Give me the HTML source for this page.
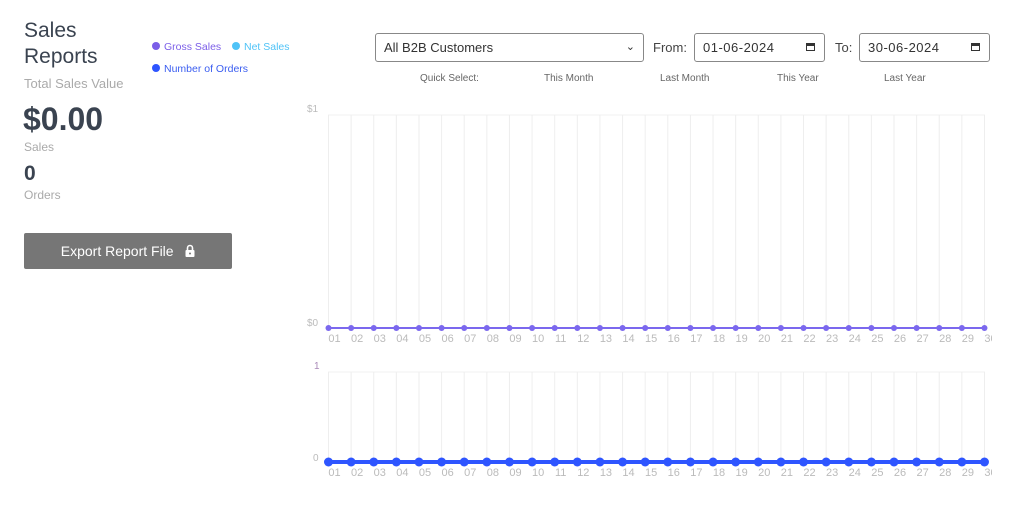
<!DOCTYPE html><html><head><style>
body{margin:0;width:1024px;height:511px;background:#fff;font-family:"Liberation Sans",sans-serif;position:relative;overflow:hidden}
.a{position:absolute;white-space:nowrap}
.box{position:absolute;border:1px solid #888;border-radius:3px;height:29px;box-sizing:border-box;font-size:13px;color:#333;line-height:27px;padding-left:8px}
.dot{display:inline-block;width:8px;height:8px;border-radius:50%;margin-right:4px}
</style></head><body>
<div class="a" style="left:24px;top:18px;font-size:21px;line-height:26px;color:#3a4350">Sales<br>Reports</div>
<div class="a" style="left:24px;top:76px;font-size:13px;color:#aaa">Total Sales Value</div>
<div class="a" style="left:23px;top:101px;font-size:32px;font-weight:bold;color:#3a4350">$0.00</div>
<div class="a" style="left:24px;top:140px;font-size:12px;color:#aaa">Sales</div>
<div class="a" style="left:24px;top:162px;font-size:21px;font-weight:bold;color:#3a4350">0</div>
<div class="a" style="left:24px;top:188px;font-size:12px;color:#aaa">Orders</div>
<div class="a" style="left:24px;top:233px;width:208px;height:36px;background:#767676;border-radius:2px;color:#fff;font-size:14px;line-height:36px;text-align:center">Export Report File &nbsp;&nbsp;<svg width="10" height="13" viewBox="0 0 10 13" style="vertical-align:-1px"><path d="M2.5 6V4a2.5 2.5 0 015 0v2" stroke="#fff" stroke-width="1.6" fill="none"/><rect x="0.5" y="6" width="9" height="7" rx="1" fill="#fff"/><circle cx="5" cy="9.5" r="1" fill="#767676"/></svg></div>
<div class="a" style="left:152px;top:41px;font-size:10.5px;color:#7b5ee8"><span class="dot" style="background:#7b5ee8"></span>Gross Sales</div>
<div class="a" style="left:232px;top:41px;font-size:10.5px;color:#4fc3f7"><span class="dot" style="background:#4fc3f7"></span>Net Sales</div>
<div class="a" style="left:152px;top:63px;font-size:10.5px;color:#3b5ef0"><span class="dot" style="background:#2e55ff"></span>Number of Orders</div>
<div class="box" style="left:375px;top:33px;width:269px">All B2B Customers<span style="position:absolute;right:8px;top:0;font-size:11px">&#8964;</span></div>
<div class="a" style="left:653px;top:40px;font-size:13px;color:#444">From:</div>
<div class="box" style="left:694px;top:33px;width:131px;letter-spacing:0.5px">01-06-2024<span style="position:absolute;right:9px;top:9px;width:9px;height:8px;border:1.5px solid #333;border-top-width:3px;box-sizing:border-box"></span></div>
<div class="a" style="left:835px;top:40px;font-size:13px;color:#444">To:</div>
<div class="box" style="left:859px;top:33px;width:131px;letter-spacing:0.5px">30-06-2024<span style="position:absolute;right:9px;top:9px;width:9px;height:8px;border:1.5px solid #333;border-top-width:3px;box-sizing:border-box"></span></div>
<div class="a" style="left:420px;top:73px;font-size:10px;color:#666">Quick Select:</div>
<div class="a" style="left:544px;top:73px;font-size:10px;color:#666">This Month</div>
<div class="a" style="left:660px;top:73px;font-size:10px;color:#666">Last Month</div>
<div class="a" style="left:777px;top:73px;font-size:10px;color:#666">This Year</div>
<div class="a" style="left:884px;top:73px;font-size:10px;color:#666">Last Year</div>
<svg id="c" class="a" style="left:0;top:0" width="992" height="511" font-family="Liberation Sans, sans-serif" font-size="11"></svg>
<script>
var s='';var X=i=>328.5+i*22.62;
s+='<text x="307" y="112" fill="#bbb" font-size="10">$1</text><text x="307" y="326" fill="#bbb" font-size="10">$0</text><text x="314" y="369" fill="#a98ab8" font-size="10">1</text><text x="313" y="461" fill="#bbb" font-size="10">0</text>';
s+='<line x1="328" y1="115" x2="985" y2="115" stroke="#f0f0f0"/><line x1="328" y1="372" x2="985" y2="372" stroke="#f0f0f0"/>';
for(var i=0;i<30;i++){var x=X(i);s+='<line x1="'+x+'" y1="115" x2="'+x+'" y2="328" stroke="#eee"/><line x1="'+x+'" y1="372" x2="'+x+'" y2="462" stroke="#eee"/>';
var l=(i+1<10?'0':'')+(i+1);s+='<text x="'+(x+6)+'" y="342" fill="#bbb" text-anchor="middle">'+l+'</text><text x="'+(x+6)+'" y="476" fill="#bbb" text-anchor="middle">'+l+'</text>';}
s+='<line x1="328" y1="328" x2="985" y2="328" stroke="#7b68ee" stroke-width="2"/><line x1="328" y1="462" x2="985" y2="462" stroke="#2e55ff" stroke-width="4"/>';
for(var i=0;i<30;i++){var x=X(i);s+='<circle cx="'+x+'" cy="328" r="3" fill="#7b68ee"/><circle cx="'+x+'" cy="462" r="4.5" fill="#2e55ff"/>';}
document.getElementById('c').innerHTML=s;
</script>
</body></html>
